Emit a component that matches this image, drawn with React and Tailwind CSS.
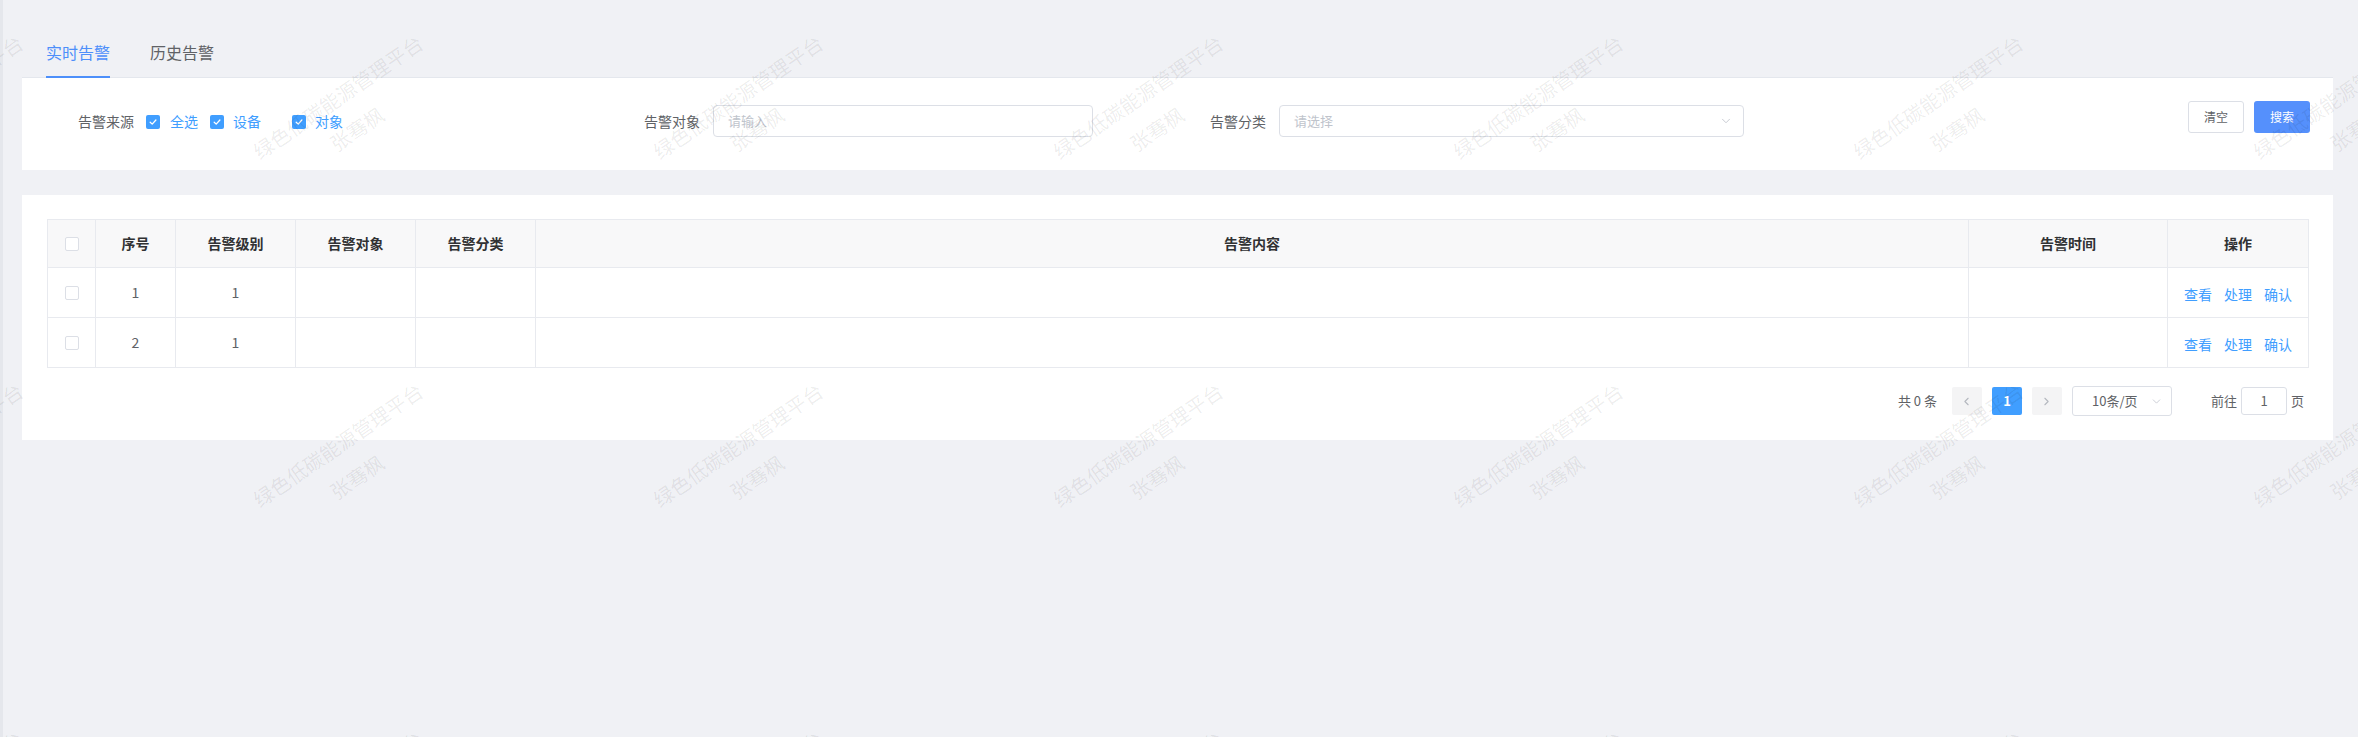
import { ChevronDown, ChevronLeft, ChevronRight } from 'lucide-react';

const FONT = { fontFamily: '"Noto Sans CJK SC", "Noto Sans", sans-serif' };

const COLS = [48, 80, 120, 120, 120, 1433, 199, 141];
const HEADERS = ['', '序号', '告警级别', '告警对象', '告警分类', '告警内容', '告警时间', '操作'];
const ROWS = [
  { no: 1, level: 1 },
  { no: 2, level: 1 },
];

// watermark grid, measured off the page (line centres)
const MARKS = [];
for (let j = 0; j < 3; j++) {
  for (let k = -1; k < 6; k++) {
    const x = 338 + 400 * k;
    const y = 97 + 348 * j;
    MARKS.push({ x, y, text: '绿色低碳能源管理平台' });
    MARKS.push({ x: x + 19, y: y + 32, text: '张骞枫' });
  }
}

function CheckBox({ checked }) {
  if (checked) {
    return (
      <span className="inline-flex w-[14px] h-[14px] shrink-0 items-center justify-center rounded-[2px] bg-[#409eff]">
        <svg width="10" height="10" viewBox="0 0 10 10" fill="none">
          <path d="M2.2 5.2 L4.2 7.1 L7.9 3" stroke="#fff" strokeWidth="1.3" strokeLinecap="round" strokeLinejoin="round" />
        </svg>
      </span>
    );
  }
  return <span className="inline-block w-[14px] h-[14px] shrink-0 rounded-[2px] border border-[#dcdfe6] bg-white" />;
}

function Watermarks() {
  return (
    <div className="pointer-events-none absolute inset-0 z-10 overflow-hidden">
      {MARKS.map((m, i) => (
        <div
          key={i}
          className="absolute whitespace-nowrap text-[20px] leading-[20px] text-[rgba(0,0,0,0.08)]"
          style={{ left: m.x, top: m.y, transform: 'translate(-50%, -50%) rotate(-34.5deg)' }}
        >
          {m.text}
        </div>
      ))}
    </div>
  );
}

export default function App() {
  return (
    <div className="relative h-[737px] w-full overflow-hidden bg-[#f0f1f5] pl-[22px] pr-[25px]" style={FONT}>
      <div className="absolute left-0 top-0 h-full w-[3px] bg-[#e5e7ec]" />

      {/* tabs */}
      <div className="flex gap-[40px] border-b border-[#e4e7ed] pl-[24px] pt-[43px]">
        <div className="relative pb-[16px] text-[16px] leading-[18px] text-[#4d8ffa]">
          实时告警
          <span className="absolute bottom-[-1px] left-0 h-[2px] w-full bg-[#4d8ffa]" />
        </div>
        <div className="pb-[16px] text-[16px] leading-[18px] text-[#606266]">历史告警</div>
      </div>

      {/* filter panel */}
      <div className="flex h-[92px] items-start bg-white pl-[56px] pr-[23px] pt-[23px]">
        <div className="mt-[4px] flex h-[32px] w-[566px] items-center text-[14px]">
          <span className="text-[#606266]">告警来源</span>
          <span className="ml-[12px]"><CheckBox checked /></span>
          <span className="ml-[10px] text-[#409eff]">全选</span>
          <span className="ml-[12px]"><CheckBox checked /></span>
          <span className="ml-[9px] text-[#409eff]">设备</span>
          <span className="ml-[31px]"><CheckBox checked /></span>
          <span className="ml-[9px] text-[#409eff]">对象</span>
        </div>
        <div className="mt-[4px] flex h-[32px] w-[566px] items-center">
          <span className="w-[56px] text-[14px] text-[#606266]">告警对象</span>
          <div className="ml-[13px] flex h-[32px] w-[380px] items-center rounded-[4px] border border-[#dcdfe6] pl-[14px] text-[13px] text-[#c0c4cc]">
            请输入
          </div>
        </div>
        <div className="mt-[4px] flex h-[32px] w-[566px] items-center">
          <span className="w-[56px] text-[14px] text-[#606266]">告警分类</span>
          <div className="ml-[13px] flex h-[32px] w-[465px] items-center justify-between rounded-[4px] border border-[#dcdfe6] pl-[14px] pr-[10px] text-[13px] text-[#c0c4cc]">
            请选择
            <ChevronDown size={14} strokeWidth={1.5} color="#c0c4cc" />
          </div>
        </div>
        <div className="ml-auto flex gap-[10px]">
          <button className="h-[32px] w-[56px] rounded-[3px] border border-[#dcdfe6] bg-white text-[12px] text-[#606266]">清空</button>
          <button className="h-[32px] w-[56px] rounded-[3px] bg-[#5590fc] text-[12px] text-white">搜索</button>
        </div>
      </div>

      {/* table panel */}
      <div className="mt-[25px] bg-white pb-[24px] pl-[25px] pr-[24px] pt-[24px]">
        <table className="w-[2262px] table-fixed border-collapse text-[14px]">
          <colgroup>
            {COLS.map((w, i) => (
              <col key={i} style={{ width: w }} />
            ))}
          </colgroup>
          <thead>
            <tr className="h-[48px] bg-[#f8f8f9]">
              {HEADERS.map((h, i) => (
                <th key={i} className="border border-[#e8eaef] text-center font-semibold text-[#303133]">
                  {i === 0 ? (
                    <span className="flex justify-center"><CheckBox /></span>
                  ) : (
                    h
                  )}
                </th>
              ))}
            </tr>
          </thead>
          <tbody>
            {ROWS.map((r) => (
              <tr key={r.no} className="h-[50px]">
                <td className="border border-[#e8eaef]">
                  <span className="flex justify-center"><CheckBox /></span>
                </td>
                <td className="border border-[#e8eaef] text-center text-[#606266]">{r.no}</td>
                <td className="border border-[#e8eaef] text-center text-[#606266]">{r.level}</td>
                <td className="border border-[#e8eaef]" />
                <td className="border border-[#e8eaef]" />
                <td className="border border-[#e8eaef]" />
                <td className="border border-[#e8eaef]" />
                <td className="border border-[#e8eaef] pt-[4px] text-center">
                  <span className="inline-flex gap-[12px] text-[#409eff]">
                    <span>查看</span>
                    <span>处理</span>
                    <span>确认</span>
                  </span>
                </td>
              </tr>
            ))}
          </tbody>
        </table>

        {/* pagination */}
        <div className="mt-[18px] flex items-center justify-end pr-[5px] text-[13px] text-[#606266]">
          <span>共 0 条</span>
          <span className="ml-[15px] flex h-[28px] w-[30px] items-center justify-center rounded-[2px] bg-[#f4f4f5]">
            <ChevronLeft size={13} strokeWidth={2} color="#b4b8bf" />
          </span>
          <span className="ml-[10px] flex h-[28px] w-[30px] items-center justify-center rounded-[2px] bg-[#409eff] font-bold text-white">1</span>
          <span className="ml-[10px] flex h-[28px] w-[30px] items-center justify-center rounded-[2px] bg-[#f4f4f5]">
            <ChevronRight size={13} strokeWidth={2} color="#b4b8bf" />
          </span>
          <span className="ml-[10px] flex h-[30px] w-[100px] items-center justify-between rounded-[3px] border border-[#dcdfe6] pl-[19px] pr-[8px]">
            10条/页
            <ChevronDown size={13} strokeWidth={1.5} color="#c0c4cc" />
          </span>
          <span className="ml-[39px]">前往</span>
          <span className="ml-[4px] flex h-[28px] w-[46px] items-center justify-center rounded-[3px] border border-[#dcdfe6]">1</span>
          <span className="ml-[4px]">页</span>
        </div>
      </div>

      <Watermarks />
    </div>
  );
}
